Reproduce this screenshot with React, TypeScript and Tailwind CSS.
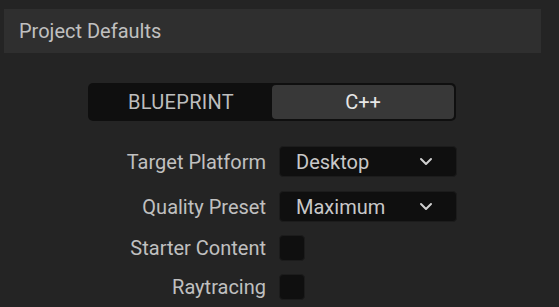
import React from "react";

const ChevronDown = () => (
  <svg width="14" height="9" viewBox="0 0 14 9" fill="none">
    <path d="M2 2l5 5 5-5" stroke="#d0d0d0" strokeWidth="2" strokeLinecap="round" strokeLinejoin="round" />
  </svg>
);

const Row: React.FC<{ label: string; children: React.ReactNode }> = ({ label, children }) => (
  <div className="flex items-center">
    <div className="w-[279px] pr-[13px] text-right text-[20px] leading-none text-[#c0c0c0]">{label}</div>
    {children}
  </div>
);

const Dropdown: React.FC<{ value: string }> = ({ value }) => (
  <div className="flex h-[31px] w-[178px] items-center justify-between rounded-[4px] border border-[#1c1c1c] bg-[#0f0f0f] pl-[16px] pr-[23px]">
    <span className="text-[20px] leading-none text-[#c8c8c8]">{value}</span>
    <ChevronDown />
  </div>
);

const Checkbox = () => (
  <div className="h-[26px] w-[26px] rounded-[4px] border border-[#1c1c1c] bg-[#0f0f0f]" />
);

export default function App() {
  return (
    <div className="h-[307px] w-[559px] bg-[#242424] pt-[9px] font-['Roboto',sans-serif]">
      <div className="ml-[4px] flex h-[44px] w-[537px] items-center bg-[#2f2f2f] pl-[15px]">
        <span className="text-[20px] leading-none text-[#c0c0c0]">Project Defaults</span>
      </div>

      <div className="ml-[88px] mt-[30px] flex h-[38px] w-[368px] items-center rounded-[5px] bg-[#0f0f0f] p-[2px]">
        <div className="flex h-full flex-1 items-center justify-center text-[20px] leading-none tracking-[0.3px] text-[#bdbdbd]">
          BLUEPRINT
        </div>
        <div className="flex h-full w-[182px] items-center justify-center rounded-[4px] bg-[#383838] text-[20px] leading-none text-[#e6e6e6]">
          C++
        </div>
      </div>

      <div className="mt-[25px] flex flex-col gap-[14px]">
        <Row label="Target Platform">
          <Dropdown value="Desktop" />
        </Row>
        <Row label="Quality Preset">
          <Dropdown value="Maximum" />
        </Row>
      </div>
      <div className="mt-[13px] flex flex-col gap-[13px]">
        <Row label="Starter Content">
          <Checkbox />
        </Row>
        <Row label="Raytracing">
          <Checkbox />
        </Row>
      </div>
    </div>
  );
}
